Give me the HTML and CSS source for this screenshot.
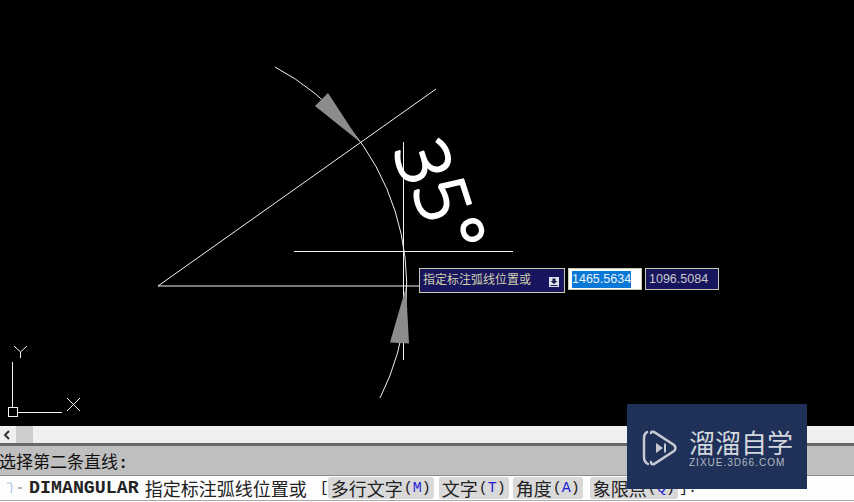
FILE: index.html
```html
<!DOCTYPE html>
<html lang="zh-CN">
<head>
<meta charset="UTF-8" />
<meta name="viewport" content="width=device-width, initial-scale=1.0"/>
<title>DIMANGULAR</title>
<link rel="stylesheet" href="styles.css">
</head>
<body>

<div class="app">
  <div class="canvas">
    <svg class="drawing" width="854" height="426" viewBox="0 0 854 426">
      <!-- UCS icon -->
      <g class="thin">
        <path d="M12.5 362V407M17 412.5H62"/>
        <rect x="8.5" y="407.5" width="9" height="9"/>
        <path d="M67 398L80 411M80 398L67 411"/>
        <path d="M14 346L20.5 352L27 346M20.5 352V358"/>
      </g>

      <!-- dimension lines -->
      <g class="thin">
        <path d="M158 286L436 89"/>
        <path d="M158 286H419"/>
        <path d="M294 251.5H513"/>
        <path d="M403.5 142V360"/>
        <path d="M275 67A248 248 0 0 1 380 398"/>
      </g>

      <!-- arrows -->
      <path class="arrow" d="M315 106L328 93L360 142Z"/>
      <path class="arrow" d="M406 287L390 342.500L409 343.500Z"/>

      <text class="dim-text" transform="translate(393 150) rotate(72)">3<tspan dy="-6">5</tspan><tspan dx="3" dy="-3">°</tspan></text>
    </svg>

    <div class="dyn-input">
      <div class="dyn-prompt">
        <span>指定标注弧线位置或</span>
        <svg class="dyn-down" width="10" height="10" viewBox="0 0 10 10">
          <rect width="10" height="10" fill="#dfe3ec"/>
          <path d="M3.500 1.500H6.500V4H8.500L5 7L1.500 4H3.500Z" fill="#1a1a4a"/>
          <path d="M1.500 8H8.500V9H1.500Z" fill="#1a1a4a"/>
        </svg>
      </div>
      <div class="dyn-field dyn-active"><span class="dyn-selected">1465.5634</span></div>
      <div class="dyn-field">1096.5084</div>
    </div>
  </div>

  <div class="hscroll">
    <span class="hscroll-arrow">
      <svg width="8" height="10" viewBox="0 0 8 10"><path d="M6 1L2 5L6 9" fill="none" stroke="#333" stroke-width="2"/></svg>
    </span>
    <span class="hscroll-thumb"></span>
  </div>

  <div class="history">选择第二条直线<i>:</i></div>

  <div class="cmdline">
    <svg class="cmd-icon" width="18" height="16" viewBox="0 0 18 16">
      <path d="M2 3H6L7 7L6 13" fill="none" stroke="#a9c4e4" stroke-width="1.200"/>
      <path d="M13 8H17" stroke="#999" stroke-width="1.500"/>
    </svg>
    <b class="cmd-name">DIMANGULAR</b>
    <span class="cmd-prompt">指定标注弧线位置或</span>
    <span class="cmd-bracket">[</span>
    <span class="opt opt-first">多行文字<i>(<u>M</u>)</i></span>
    <span class="opt">文字<i>(<u>T</u>)</i></span>
    <span class="opt">角度<i>(<u>A</u>)</i></span>
    <span class="opt opt-last">象限点<i>(<u>Q</u>)</i></span>
    <span class="cmd-end">]:</span>
  </div>
</div>

<div class="watermark">
  <svg class="wm-logo" width="36" height="38" viewBox="0 0 36 38">
    <path d="M5 3Q2 5 2 9V28Q2 33 6 35" fill="none" stroke="#c6cad2" stroke-width="2.500" stroke-linecap="round"/>
    <path d="M9 4Q9 2 12 3L32 16Q35 19 32 22L12 35Q9 36 9 33" fill="none" stroke="#c6cad2" stroke-width="2.500" stroke-linecap="round"/>
    <path d="M14 14L21 19L14 24Z" fill="#c6cad2"/>
    <path d="M23 14.500V23.500" stroke="#c6cad2" stroke-width="2"/>
  </svg>
  <div class="wm-text">
    <div class="wm-title">溜溜自学</div>
    <div class="wm-url">ZIXUE.3D66.COM</div>
  </div>
</div>

</body>
</html>
```

FILE: styles.css
```css
* {
  margin: 0;
  padding: 0;
  box-sizing: border-box;
}

body {
  width: 854px;
  height: 502px;
  overflow: hidden;
  background: #fff;
  position: relative;
  font-family: "Liberation Sans", "Noto Sans CJK SC", sans-serif;
}

.app {
  display: flex;
  flex-direction: column;
  height: 502px;
}

.canvas {
  position: relative;
  height: 426px;
  background: #000;
}

.drawing {
  display: block;
}

.thin path,
.thin rect {
  fill: none;
  stroke: #f2f2f2;
  stroke-width: 1;
}

.arrow {
  fill: #8c8c8c;
}

.dim-text {
  font-family: "Open Sans", sans-serif;
  font-weight: 300;
  font-size: 72px;
  fill: #fff;
  stroke: #fff;
  stroke-width: 2.500px;
  stroke-linejoin: round;
}

.dyn-input {
  position: absolute;
  left: 419px;
  top: 268px;
  display: flex;
  align-items: flex-start;
  gap: 3px;
}

.dyn-prompt {
  width: 146px;
  height: 25px;
  padding: 0 5px 4px 3px;
  display: flex;
  align-items: center;
  justify-content: space-between;
  background: #17155e;
  border: 1px solid #c9c9ac;
  color: #d0d0ae;
  font-size: 12px;
}

.dyn-down {
  margin-top: 6px;
}

.dyn-field {
  width: 74px;
  height: 22px;
  padding-left: 3px;
  display: flex;
  align-items: center;
  background: #17155e;
  border: 1px solid #c9c9ac;
  color: #c9c9c9;
  font-size: 12.500px;
}

.dyn-active {
  background: #fff;
}

.dyn-selected {
  background: #0a78d7;
  color: #e8f2fb;
  line-height: 17px;
}

.hscroll {
  height: 17px;
  display: flex;
  background: #f0f0f0;
}

.hscroll-arrow {
  width: 16px;
  padding-left: 3px;
  display: flex;
  align-items: center;
}

.hscroll-thumb {
  width: 17px;
  background: #cdcdcd;
}

.history {
  height: 33px;
  padding: 4px 0 0 0;
  margin-left: -1px;
  background: #bfbfbf;
  border-top: 3px solid #686868;
  border-bottom: 1px solid #8e8e8e;
  color: #111;
  font-size: 17px;
  line-height: 26px;
}

.history i {
  font-style: normal;
  font-weight: bold;
  font-family: "Liberation Mono", monospace;
}

.cmdline {
  height: 25px;
  display: flex;
  align-items: center;
  background: #fdfdfd;
  border-bottom: 1px solid #a8a8a8;
  color: #222;
  font-size: 18px;
}

.cmd-icon {
  margin-left: 5px;
  width: 18px;
  flex-shrink: 0;
}

.cmd-name {
  margin-left: 6px;
  font-family: "Liberation Mono", monospace;
  font-size: 18.300px;
}

.cmd-prompt {
  margin-left: 6px;
}

.cmd-bracket {
  margin-left: 13px;
  width: 8px;
  font-size: 15px;
  font-family: "Liberation Mono", monospace;
}

.opt {
  height: 22px;
  margin-right: 4px;
  padding: 0 3px;
  display: flex;
  align-items: center;
  background: #d9d9d9;
  border-radius: 3px;
  white-space: nowrap;
}

.opt-first {
  margin-right: 5px;
}

.opt i {
  font-style: normal;
  font-family: "Liberation Mono", monospace;
  font-size: 15px;
  margin-left: 1px;
}

.opt u {
  text-decoration: none;
  color: #1f1fd0;
}

.opt-last {
  margin-left: 3px;
  margin-right: 1px;
}

.cmd-end {
  font-family: "Liberation Mono", monospace;
  font-size: 15px;
}

.watermark {
  position: absolute;
  left: 627px;
  top: 404px;
  width: 180px;
  height: 85px;
  padding: 25px 0 0 15px;
  display: flex;
  gap: 11px;
  background: #1f3158;
}

.wm-logo {
  flex-shrink: 0;
}

.wm-title {
  color: #d4d7dd;
  font-family: "Noto Sans CJK SC", sans-serif;
  font-size: 26px;
  line-height: 26px;
}

.wm-url {
  margin-top: 3px;
  color: #b4b9c4;
  font-size: 10px;
  line-height: 10px;
  letter-spacing: 1px;
}
```
